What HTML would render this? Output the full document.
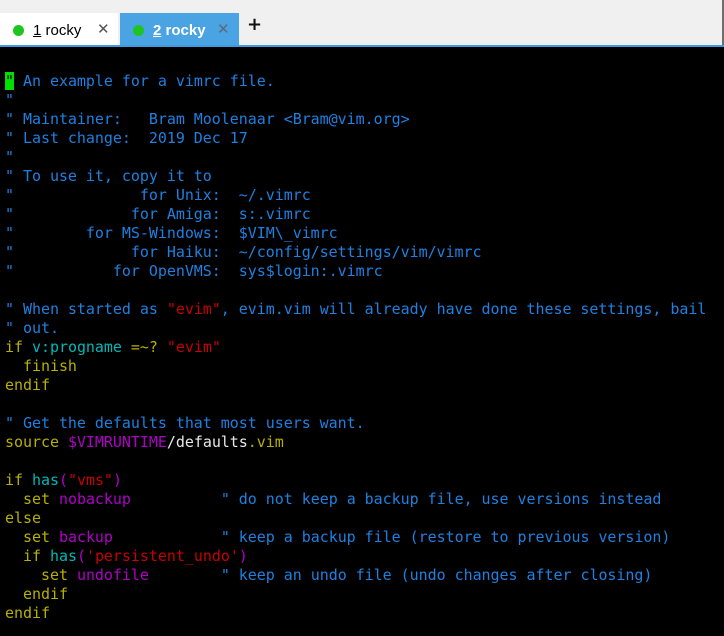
<!DOCTYPE html>
<html><head><meta charset="utf-8"><style>
html,body{margin:0;padding:0;width:724px;height:636px;overflow:hidden;background:#000}
#top{position:absolute;left:0;top:0;width:722px;height:46px;background:#f0f0f0}
#edge{position:absolute;left:722px;top:0;width:2px;height:47px;background:#6e6e6e}
#line{position:absolute;left:0;top:45px;width:724px;height:2px;background:#3d9be0}
.tab{position:absolute;top:13px;height:33px;font:15px "Liberation Sans",sans-serif;line-height:35px}
.t1{left:0;width:118px;background:#fff;color:#000}
.t2{left:120px;width:119px;background:#4aa3e3;color:#fff;font-weight:bold}
.dot{position:absolute;left:13px;top:12px;width:11px;height:11px;border-radius:50%;background:#1ec51e}
.lbl{position:absolute;left:33px}
.x{position:absolute;left:97px;top:-1px;font:15px "DejaVu Sans",sans-serif;line-height:35px;color:#555}
.t2 .x{color:#5a6a78}
.plus{position:absolute;left:247px;top:14px;line-height:33px;font:bold 18px "DejaVu Sans",sans-serif;color:#111}
pre{position:absolute;left:5px;top:72px;margin:0;font:15px "DejaVu Sans Mono","Liberation Mono",monospace;letter-spacing:-0.04px;line-height:19px;color:#e8e8e8}
.c{color:#1e80e0}.k{color:#b8b000}.v{color:#00b8b8}.s{color:#c80000}.p{color:#b000c8}
.cur{background:#00e000;color:#000}
</style></head><body>
<div id="top"></div><div id="edge"></div>
<div class="tab t1"><span class="dot"></span><span class="lbl"><u>1</u> rocky</span><span class="x">✕</span></div>
<div class="tab t2"><span class="dot"></span><span class="lbl"><u>2</u> rocky</span><span class="x">✕</span></div>
<div class="plus">+</div>
<div id="line"></div>
<pre><span class="cur">"</span><span class="c"> An example for a vimrc file.
"
" Maintainer:   Bram Moolenaar &lt;Bram@vim.org&gt;
" Last change:  2019 Dec 17
"
" To use it, copy it to
"              for Unix:  ~/.vimrc
"             for Amiga:  s:.vimrc
"        for MS-Windows:  $VIM\_vimrc
"             for Haiku:  ~/config/settings/vim/vimrc
"           for OpenVMS:  sys$login:.vimrc

" When started as </span><span class="s">"evim"</span><span class="c">, evim.vim will already have done these settings, bail
" out.</span>
<span class="k">if</span> <span class="v">v:progname</span> <span class="k">=~?</span> <span class="s">"evim"</span>
<span class="k">  finish
endif</span>

<span class="c">" Get the defaults that most users want.</span>
<span class="k">source</span> <span class="p">$VIMRUNTIME</span>/defaults<span class="k">.vim</span>

<span class="k">if</span> <span class="v">has</span><span class="p">(</span><span class="s">"vms"</span><span class="p">)</span>
  <span class="k">set</span> <span class="p">nobackup</span>          <span class="c">" do not keep a backup file, use versions instead</span>
<span class="k">else</span>
  <span class="k">set</span> <span class="p">backup</span>            <span class="c">" keep a backup file (restore to previous version)</span>
  <span class="k">if</span> <span class="v">has</span><span class="p">(</span><span class="s">'persistent_undo'</span><span class="p">)</span>
    <span class="k">set</span> <span class="p">undofile</span>        <span class="c">" keep an undo file (undo changes after closing)</span>
<span class="k">  endif
endif</span></pre>
</body></html>
